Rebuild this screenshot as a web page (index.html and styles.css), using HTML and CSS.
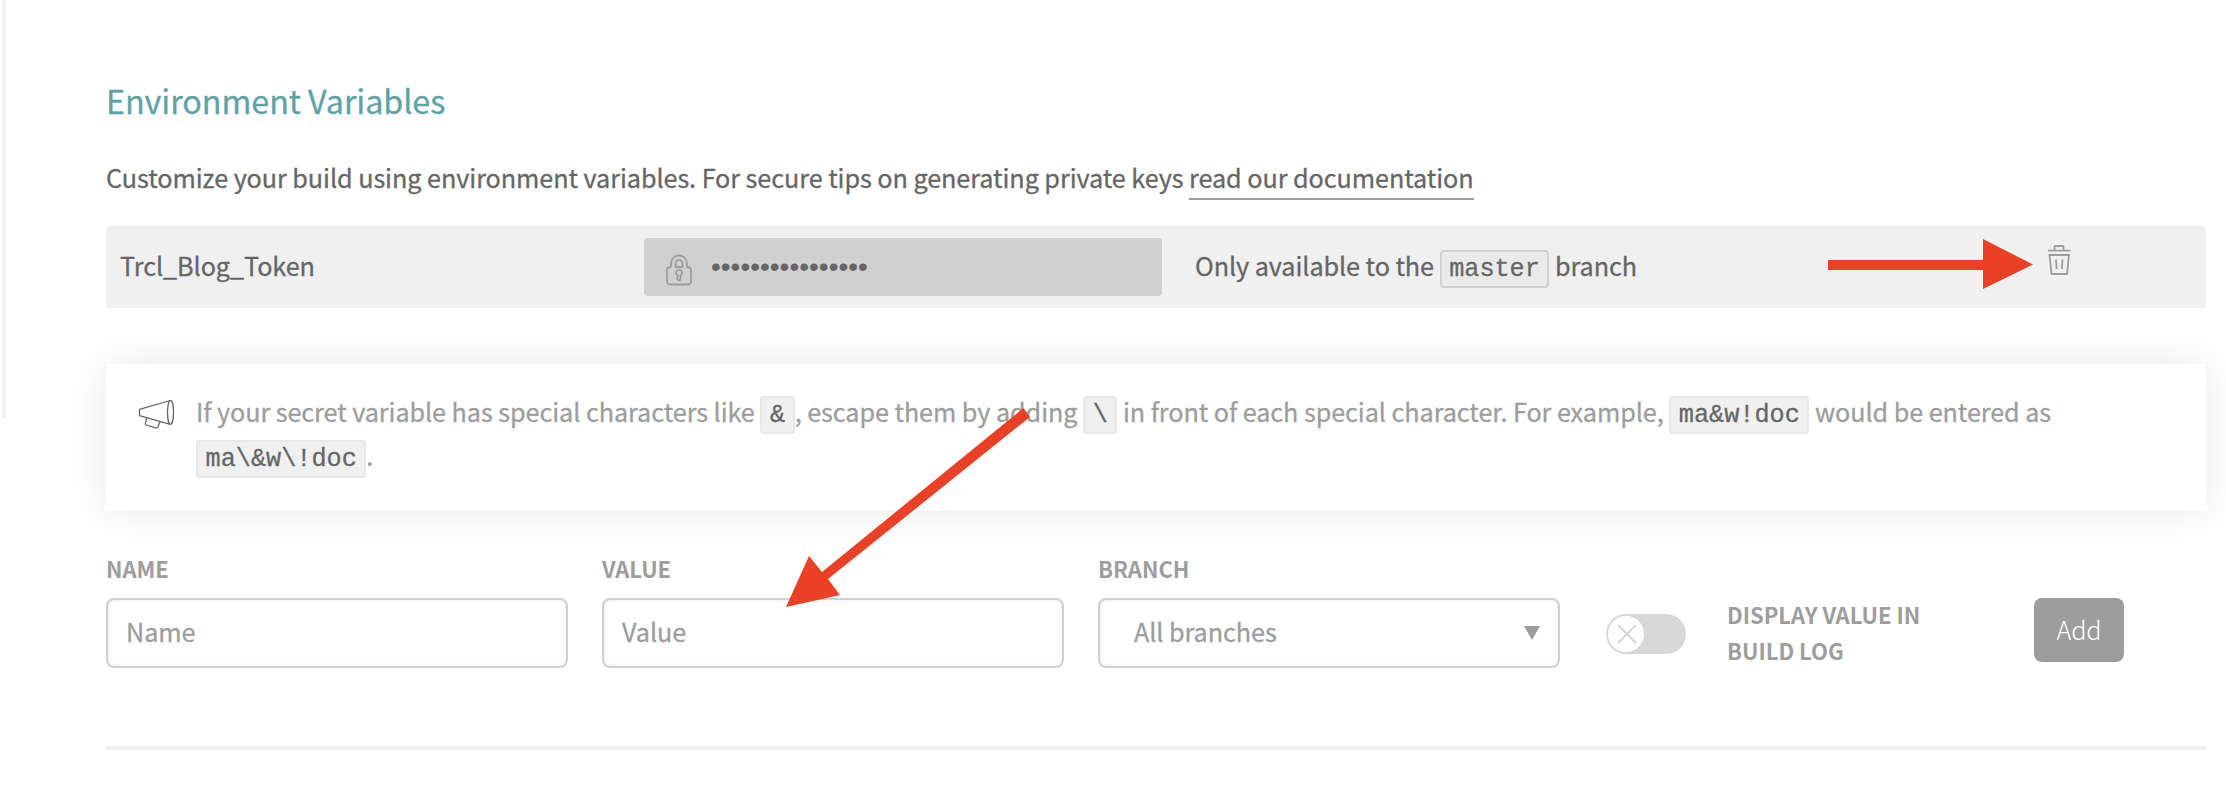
FILE: index.html
```
<!DOCTYPE html>
<html lang="en">
<head>
<meta charset="utf-8">
<title>Environment Variables</title>
<link rel="stylesheet" href="styles.css">
</head>
<body>
<div class="page">
  <div class="rail"></div>
  <main class="content">
    <h2 class="title">Environment Variables</h2>
    <p class="intro">Customize your build using environment variables. For secure tips on generating private keys <a class="link">read our documentation</a></p>
    <section class="row">
      <div class="row-name">Trcl_Blog_Token</div>
      <div class="secret">
        <svg class="lock" viewBox="0 0 26 32" width="26" height="32" fill="none" stroke="#9d9d9d" stroke-width="1.800"><path d="M5 13V10a8 8.500 0 0 1 16 0V13Q25 13 25 16V27.500a3 3 0 0 1-3 3H4a3 3 0 0 1-3-3V16Q1 13 5 13M9.500 13V9.500a3.500 3.500 0 0 1 7 0V13zM11.500 21.500a3 3 0 1 1 3 0V25a1.500 1.500 0 0 1-3 0z"/></svg>
        <span class="dots">••••••••••••••••</span>
      </div>
      <div class="row-branch">Only available to the <code class="code dark">master</code> branch</div>
      <svg class="trash" viewBox="0 0 24 32" width="24" height="32" fill="none" stroke="#9d9d9d" stroke-width="1.800"><path d="M1 6.700H23.500M7.500 6.700V3a1 1 0 0 1 1-1h7a1 1 0 0 1 1 1V6.700M2.500 11H22L20 30H4.500zM9 15.500l.6 9.500M15.500 15.500l-.6 9.500"/></svg>
    </section>
    <section class="tip">
      <svg class="horn" viewBox="0 0 38 32" width="38" height="32" fill="none" stroke="#666" stroke-width="1.300" stroke-linejoin="round"><path d="M32.300 1.500L1.500 10.300V16.700L32.300 25.300M8.700 18.700L7.500 24Q7.300 25.500 8.600 26L17.500 28.800Q19 29.200 19.800 28L22 22.400"/><ellipse cx="32.500" cy="13.400" rx="3" ry="12"/></svg>
      <p class="tip-text">If your secret variable has special characters like <code class="code">&amp;</code>, escape them by adding <code class="code">\</code> in front of each special character. For example, <code class="code">ma&amp;w!doc</code> would be entered as <code class="code">ma\&amp;w\!doc</code>.</p>
    </section>
    <form class="form">
      <div class="field"><label class="label">NAME</label><div class="input">Name</div></div>
      <div class="field"><label class="label">VALUE</label><div class="input">Value</div></div>
      <div class="field"><label class="label">BRANCH</label><div class="input select"><span>All branches</span><i class="caret"></i></div></div>
      <div class="toggle"><div class="knob"><svg viewBox="0 0 20 20" width="20" height="20" stroke="#d5d5d5" stroke-width="2"><path d="M1 1L19 19M19 1L1 19"/></svg></div></div>
      <div class="label toggle-label">DISPLAY VALUE IN<br>BUILD LOG</div>
      <div class="add">Add</div>
    </form>
    <hr class="rule">
  </main>
  <svg class="arrows" viewBox="0 0 2226 810" width="2226" height="810" fill="#ea4025"><path d="M1828 260H1983V239L2033 264.500L1983 289V270H1828zM1023.500 408L1030 417L828 579L840 595L786 607L809 556L822 572z"/></svg>
</div>
</body>
</html>
```
FILE: styles.css
```
* { box-sizing: border-box; }
body {
  margin: 0;
  background: #fff;
  color: #666;
  font-family: "Noto Sans CJK SC", "Noto Sans", sans-serif;
  font-size: 25.200px;
  line-height: 45px;
  letter-spacing: -.06px;
}
.page { position: relative; display: flex; height: 810px; overflow: hidden; background: #fff; }
.rail { width: 4px; height: 418px; margin-left: 2px; background: #f2f2f2; }
.content { width: 2100px; margin-left: 100px; padding-top: 70px; }
.title { margin: 0; font-size: 32.300px; font-weight: 400; line-height: 60px; color: #5da3a6; -webkit-text-stroke: .3px; }
.intro { height: 45px; margin: 25px 0 26px; }
.intro, .row-name, .row-branch, .tip-text, .input { -webkit-text-stroke: .3px; }
.link { display: inline-block; height: 45px; border-bottom: 2px solid #9d9d9d; }
.row { display: flex; align-items: center; height: 82px; padding: 0 14px; border-radius: 4px; background: #f0f0f0; }
.row-name { width: 524px; padding-bottom: 4px; }
.secret { display: flex; align-items: center; width: 518px; height: 58px; padding-left: 22px; border-radius: 4px; background: #d0d0d0; }
.lock { margin-top: 6px; }
.dots { margin: -2px 0 0 19px; font-family: "Liberation Sans", Arial, sans-serif; font-size: 28px; letter-spacing: 0; }
.row-branch { width: 852px; margin-left: 33px; padding-bottom: 4px; white-space: nowrap; }
.trash { margin-top: -14px; }
.code {
  padding: 3px 7.600px 2px;
  border: 2px solid #e8e8e8;
  border-radius: 4px;
  background: #f0f0f0;
  color: #666;
  font: 25.200px/1 "Liberation Mono", monospace;
  letter-spacing: 0;
}
.code.dark { border-color: #d0d0d0; background: #eaeaea; }
.tip { display: flex; height: 146px; margin-top: 56px; padding: 25px 32px; background: #fff; box-shadow: 0 0 40px rgba(0,0,0,.09); }
.horn { margin-top: 10px; }
.tip-text { width: 1900px; margin: 0 0 0 20px; line-height: 44px; color: #9d9d9d; }
.form { display: flex; height: 158px; margin-top: 40px; }
.field { width: 462px; margin-right: 34px; }
.label { display: block; font-size: 22px; font-weight: 700; line-height: 36px; color: #9d9d9d; letter-spacing: 0; }
.input { display: flex; align-items: center; height: 70px; margin-top: 12px; padding: 0 18px 4px; border: 2px solid #d0d0d0; border-radius: 8px; box-shadow: inset 0 0 4px rgba(0,0,0,.1); color: #9d9d9d; }
.select { justify-content: space-between; padding: 0 18px 4px 34px; }
.caret { margin-top: 4px; border: 8px solid transparent; border-top: 14px solid #9d9d9d; border-bottom: 0; }
.toggle { width: 80px; height: 40px; margin: 64px 0 0 12px; padding: 2px; border-radius: 20px; background: #d8d8d8; }
.knob { display: flex; align-items: center; justify-content: center; width: 36px; height: 36px; padding-left: 2px; border-radius: 50%; background: #fff; }
.toggle-label { width: 307px; margin: 46px 0 0 41px; }
.add { width: 90px; height: 64px; margin-top: 48px; border-radius: 8px; background: #9d9d9d; color: #fff; font-weight: 300; line-height: 62px; text-align: center; }
.rule { height: 4px; margin: 38px 0 0; border: 0; background: #f1f1f1; }
.arrows { position: absolute; left: 0; top: 0; }
```
